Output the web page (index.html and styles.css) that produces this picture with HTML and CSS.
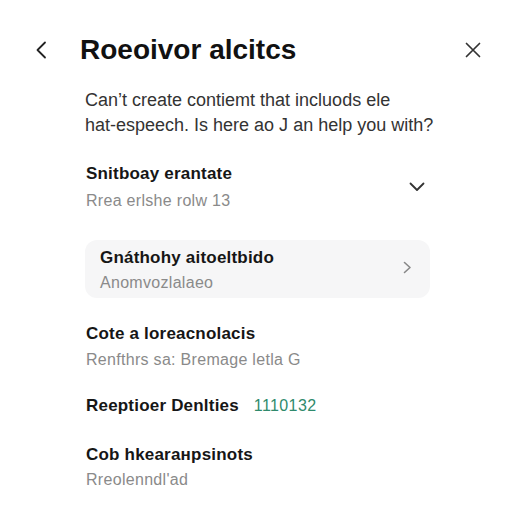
FILE: index.html
```html
<!DOCTYPE html>
<html lang="en">
<head>
<meta charset="utf-8">
<title>Roeoivor alcitcs</title>
<link rel="stylesheet" href="styles.css">
</head>
<body>
<div class="screen">
  <header class="topbar">
    <button class="icon-btn back" aria-label="Back">
      <svg width="14" height="18" viewBox="0 0 14 18"><path d="M11 1.5 3.5 9 11 16.5" fill="none" stroke="#222" stroke-width="1.8" stroke-linecap="round" stroke-linejoin="round"/></svg>
    </button>
    <h1 class="title">Roeoivor alcitcs</h1>
    <button class="icon-btn close" aria-label="Close">
      <svg width="16" height="16" viewBox="0 0 16 16"><path d="M1.5 1.5 14.5 14.5M14.5 1.5 1.5 14.5" fill="none" stroke="#333" stroke-width="1.7" stroke-linecap="round"/></svg>
    </button>
  </header>

  <main class="content">
    <p class="intro">Can’t create contiemt that incluods ele<br>hat-espeech. Is here ao J an help you with?</p>

    <section class="item item-first">
      <div class="item-text">
        <div class="item-title">Snitboay erantate</div>
        <div class="item-sub">Rrea erlshe rolw 13</div>
      </div>
      <svg class="chev-down" width="16" height="10" viewBox="0 0 16 10"><path d="M1.5 1.5 8 8 14.5 1.5" fill="none" stroke="#333" stroke-width="1.8" stroke-linecap="round" stroke-linejoin="round"/></svg>
    </section>

    <section class="item card">
      <div class="item-text">
        <div class="item-title">Gnáthohy aitoeltbido</div>
        <div class="item-sub">Anomvozlalaeo</div>
      </div>
      <svg class="chev-right" width="9" height="13" viewBox="0 0 9 13"><path d="M1.5 1.5 7 6.5 1.5 11.5" fill="none" stroke="#888" stroke-width="1.6" stroke-linecap="round" stroke-linejoin="round"/></svg>
    </section>

    <section class="item item-3">
      <div class="item-text">
        <div class="item-title">Cote a loreacnolacis</div>
        <div class="item-sub">Renfthrs sa: Bremage letla G</div>
      </div>
    </section>

    <section class="item item-4">
      <div class="item-title">Reeptioer Denlties <span class="count">1110132</span></div>
    </section>

    <section class="item item-5">
      <div class="item-text">
        <div class="item-title">Cob hkearaнpsinots</div>
        <div class="item-sub">Rreolenndl'ad</div>
      </div>
    </section>
  </main>
</div>
</body>
</html>
```

FILE: styles.css
```css
* { box-sizing: border-box; }

html, body {
  margin: 0;
  padding: 0;
  background: #ffffff;
}

body {
  font-family: "Liberation Sans", Arial, sans-serif;
  color: #222;
  width: 512px;
  height: 512px;
  overflow: hidden;
}

.topbar {
  display: flex;
  align-items: center;
  padding: 34px 30px 0 33px;
  height: 66px;
}

.icon-btn {
  border: 0;
  background: none;
  padding: 0;
  display: flex;
  align-items: center;
  justify-content: center;
  cursor: pointer;
}

.back { width: 16px; height: 32px; }

.title {
  margin: 0 0 0 31px;
  font-size: 28px;
  line-height: 32px;
  font-weight: 700;
  color: #111;
  flex: 1;
}

.close { width: 18px; height: 32px; }

.content {
  padding: 0 82px 0 86px;
}

.intro {
  margin: 22px 0 0 -1px;
  font-size: 18px;
  line-height: 25px;
  color: #333;
  white-space: nowrap;
}

.item {
  display: flex;
  align-items: center;
}

.item-text { flex: 1; }

.item-title {
  font-size: 17px;
  line-height: 22px;
  font-weight: 700;
  color: #161616;
  letter-spacing: 0.2px;
}

.item-sub {
  font-size: 16px;
  line-height: 22px;
  color: #8a8a8a;
  margin-top: 5px;
  letter-spacing: 0.3px;
}

.item-first { margin-top: 25px; }

.chev-down { margin: -2px 5px 0 0; }

.card {
  margin-top: 28px;
  margin-left: -1px;
  background: #f6f6f7;
  border-radius: 12px;
  padding: 7px 18px 4px 15px;
}

.card .item-sub { margin-top: 3px; }

.chev-right { margin-top: -6px; }

.item-3 { margin-top: 25px; }
.item-3 .item-sub { margin-top: 4px; }

.item-4 { margin-top: 24px; }

.count {
  margin-left: 10px;
  font-weight: 400;
  font-size: 16px;
  letter-spacing: 0.4px;
  color: #2f8a6c;
}

.item-5 { margin-top: 27px; }
.item-5 .item-sub { margin-top: 3px; }
```
